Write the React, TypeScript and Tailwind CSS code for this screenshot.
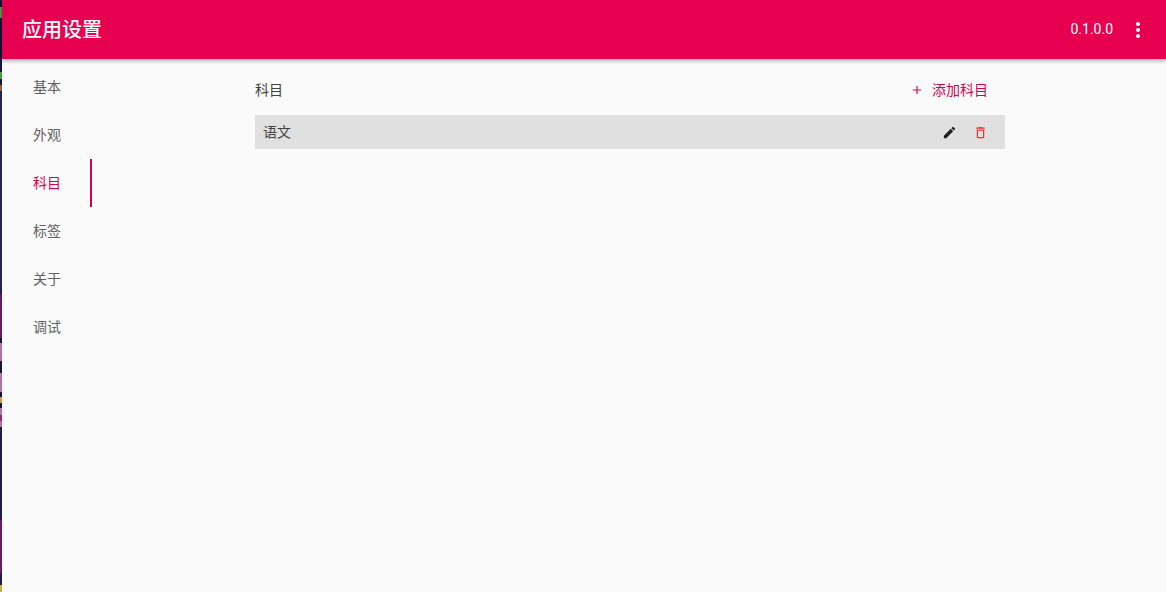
import React from "react";
import { MdAdd, MdDeleteOutline, MdEdit, MdMoreVert } from "react-icons/md";

function Strip() {
  return (
    <div className="flex h-[592px] w-[2px] shrink-0 flex-col">
      <div className="h-[7px] bg-[#14163c]" />
      <div className="h-[11px] bg-[#5a9a4a]" />
      <div className="h-[54px] bg-[#14163c]" />
      <div className="h-[7px] bg-[#3ca040]" />
      <div className="h-[6px] bg-[#14163c]" />
      <div className="h-[6px] bg-[#9a5a40]" />
      <div className="h-[204px] bg-[#2a2050]" />
      <div className="h-[43px] bg-[#6a1a5e]" />
      <div className="h-[5px] bg-[#14163c]" />
      <div className="h-[18px] bg-[#b870a8]" />
      <div className="h-[12px] bg-[#14163c]" />
      <div className="h-[19px] bg-[#b870a8]" />
      <div className="h-[5px] bg-[#14163c]" />
      <div className="h-[6px] bg-[#c8a050]" />
      <div className="h-[5px] bg-[#14163c]" />
      <div className="h-[7px] bg-[#b870a8]" />
      <div className="h-[6px] bg-[#8a2a70]" />
      <div className="h-[6px] bg-[#b870a8]" />
      <div className="h-[93px] bg-[#1e1c48]" />
      <div className="h-[53px] bg-[#6a1a5e]" />
      <div className="h-[12px] bg-[#1e1c48]" />
      <div className="h-[7px] bg-[#c8b040]" />
    </div>
  );
}

const tabs = ["基本", "外观", "科目", "标签", "关于", "调试"];

export default function App() {
  return (
    <div className="flex h-[592px] w-[1166px] overflow-hidden bg-[#fafafa] font-['Roboto','Noto_Sans_CJK_SC',sans-serif]">
      <Strip />
      <div className="flex min-w-0 flex-1 flex-col">
        <header className="relative z-10 flex h-[59px] shrink-0 items-center justify-between bg-[#e6004f] pl-5 pr-4 text-white shadow-[0_2px_4px_rgba(0,0,0,0.3)]">
          <h1 className="text-[20px] font-medium leading-none">应用设置</h1>
          <div className="flex items-center gap-[13px]">
            <span className="text-[14px]">0.1.0.0</span>
            <MdMoreVert className="size-6" />
          </div>
        </header>
        <div className="flex min-h-0 flex-1">
          <nav className="mt-1 flex w-[90px] shrink-0 flex-col">
            {tabs.map((t) => (
              <div
                key={t}
                className={
                  t === "科目"
                    ? "flex h-12 items-center border-r-2 border-[#d6004f] pl-[31px] text-[14px] text-[#d6004f]"
                    : "flex h-12 items-center pl-[31px] text-[14px] text-[#616161]"
                }
              >
                {t}
              </div>
            ))}
          </nav>
          <main className="ml-[163px] mt-[13px] w-[750px]">
            <div className="flex h-9 items-center justify-between">
              <span className="text-[14px] text-[#424242]">科目</span>
              <button className="mr-[17px] flex items-center gap-[8px] text-[14px] text-[#d6004f]">
                <MdAdd className="size-[14px]" />
                添加科目
              </button>
            </div>
            <div className="mt-[7px] flex h-[34px] items-center justify-between bg-[#e0e0e0] pl-2 pr-[17px]">
              <span className="text-[14px] text-[#424242]">语文</span>
              <div className="flex items-center gap-[16px]">
                <MdEdit className="size-[15px] text-[#212121]" />
                <MdDeleteOutline className="size-[15px] text-[#e53935]" />
              </div>
            </div>
          </main>
        </div>
      </div>
    </div>
  );
}
